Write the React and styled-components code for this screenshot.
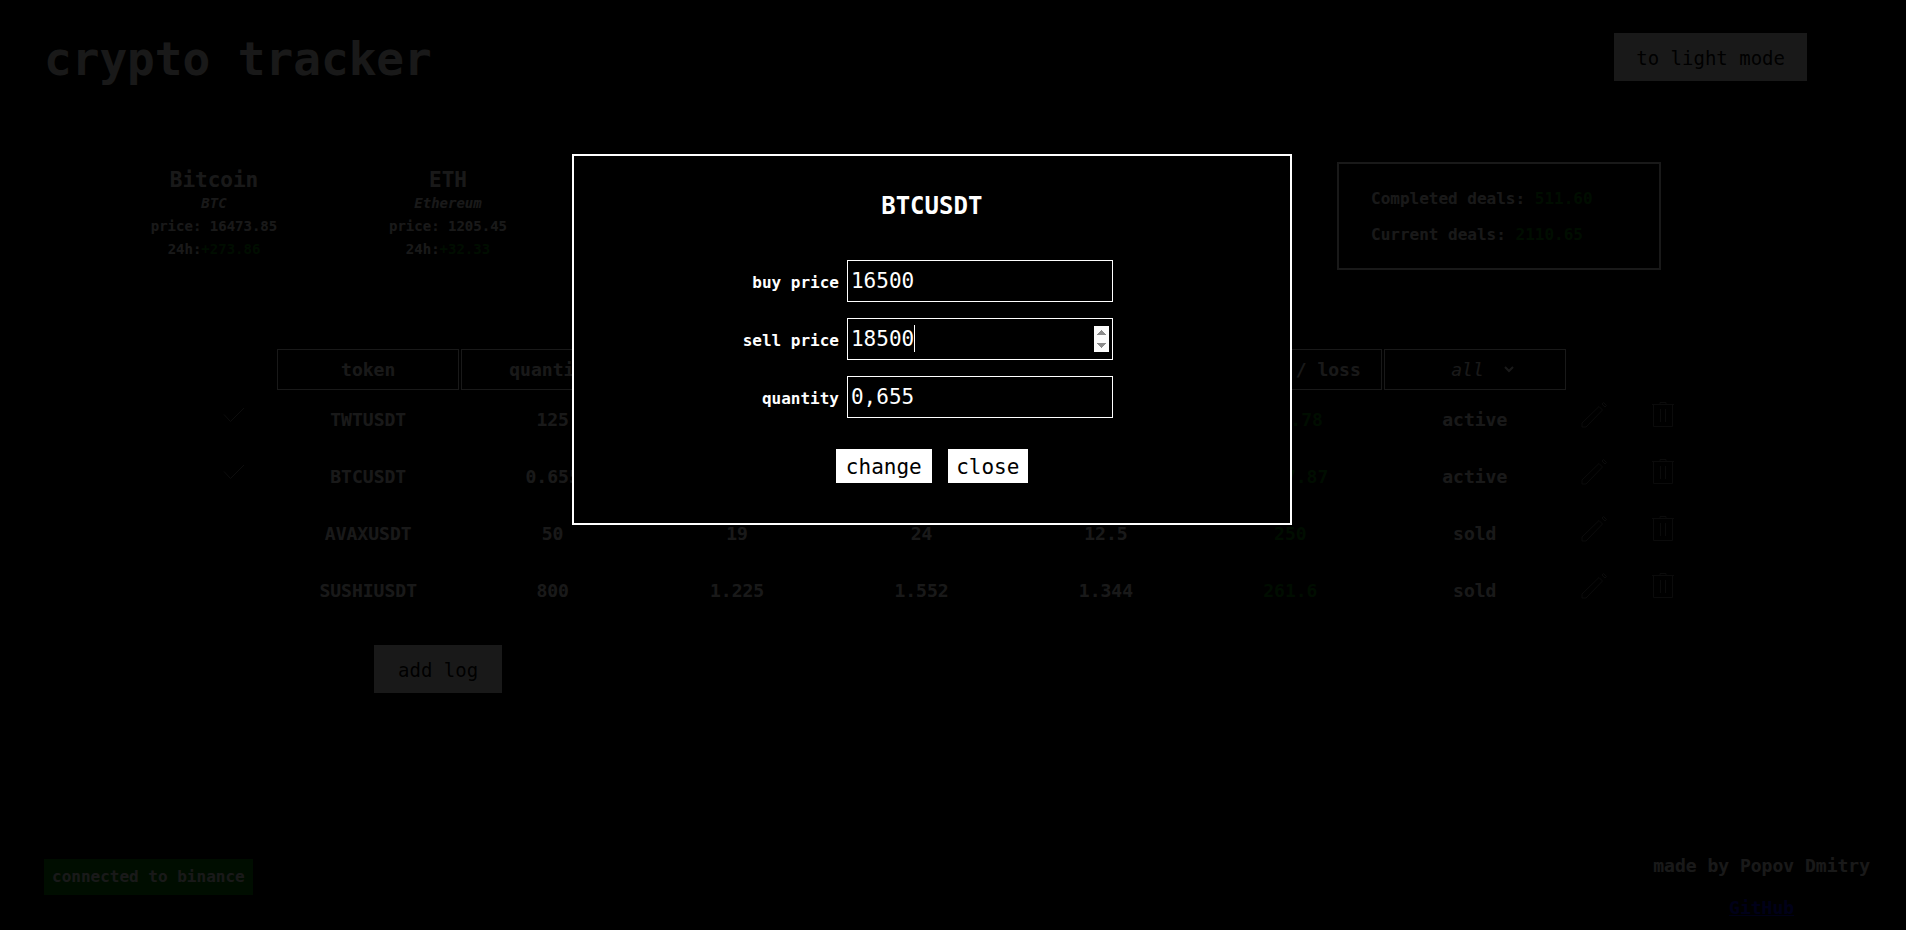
import React, { useState } from "react";
import styled, { createGlobalStyle } from "styled-components";

const GlobalStyle = createGlobalStyle`
  *, *::before, *::after { box-sizing: border-box; }
  body {
    margin: 0;
    background: #000;
    color: #fff;
    font-family: "DejaVu Sans Mono", "Liberation Mono", monospace;
  }
  button, input, select { font-family: inherit; }
`;

const Page = styled.div`
  display: flex;
  flex-direction: column;
  min-height: 100vh;
`;

const Header = styled.header`
  display: flex;
  justify-content: space-between;
  align-items: flex-start;
  padding: 24px 99px 0 44px;
`;

const Title = styled.h1`
  margin: 0;
  font-size: 46px;
  line-height: 70px;
`;

const ActionButton = styled.button`
  height: 48px;
  padding: 2px ${(p) => p.$pad}px 0;
  border: 0;
  background: #fff;
  color: #000;
  font-size: 19px;
`;

const ThemeSwitch = styled(ActionButton)`
  margin-top: 9px;
`;

const Summary = styled.section`
  display: flex;
  justify-content: space-between;
  align-items: flex-start;
  padding: 68px 245px 0 97px;
`;

const Coins = styled.div`
  display: flex;
`;

const Coin = styled.article`
  width: 234px;
  font-size: 14px;
  font-weight: 700;
  line-height: 23px;
  text-align: center;
`;

const CoinName = styled.h2`
  margin: 6px 0 0;
  font-size: 21px;
  line-height: 24px;
`;

const CoinLine = styled.p`
  margin: 0;
`;

const Gain = styled.span`
  color: #008000;
`;

const Deals = styled.div`
  width: 324px;
  padding: 17px 32px 15px;
  border: 2px solid #fff;
  font-size: 16px;
  font-weight: 700;
  line-height: 36px;
`;

const Main = styled.main`
  flex: 1;
  padding: 77px 200px 0 191px;
`;

const Table = styled.table`
  width: 100%;
  table-layout: fixed;
  border-collapse: separate;
  border-spacing: 2px;
  font-size: 18px;
  font-weight: 700;
  text-align: center;
`;

const Col = styled.col`
  width: ${(p) => p.$w}px;
`;

const HeadCell = styled.th`
  height: 41px;
  padding: 0;
  border: 1px solid #fff;
  white-space: nowrap;
`;

const Cell = styled.td`
  height: 55px;
  padding: 0;
  color: ${(p) => (p.$gain ? "#008000" : "inherit")};
`;

const FilterWrap = styled.span`
  display: inline-flex;
  align-items: center;
  gap: 20px;
  padding-left: 16px;
`;

const Filter = styled.select`
  appearance: none;
  padding: 0;
  border: 0;
  background: transparent;
  color: #fff;
  font-size: 18px;
  font-style: italic;
`;

const IconButton = styled.button`
  display: block;
  margin: 0 auto;
  padding: 0 0 10px;
  border: 0;
  background: none;
  color: #fff;
  line-height: 0;
`;

const AddRow = styled.div`
  padding: 25px 0 0 183px;
`;

const Footer = styled.footer`
  display: flex;
  justify-content: space-between;
  align-items: flex-start;
  padding: 0 36px 0 44px;
`;

const Status = styled.p`
  margin: 5px 0 0;
  padding: 0 8px;
  background: #008000;
  font-size: 16px;
  font-weight: 700;
  line-height: 36px;
`;

const Credits = styled.div`
  font-size: 18px;
  font-weight: 700;
  line-height: 24px;
  text-align: center;
`;

const CreditLine = styled.p`
  margin: 0 0 18px;
`;

const Link = styled.a`
  display: block;
  margin-bottom: 10px;
  color: #0000ee;
`;

const Overlay = styled.div`
  position: fixed;
  inset: 0;
  padding: 154px 0 0 30%;
  background: rgba(0, 0, 0, 0.9);
`;

const Dialog = styled.form`
  display: flex;
  flex-direction: column;
  align-items: center;
  width: 720px;
  max-width: 90%;
  padding: 34px 0 40px;
  border: 2px solid #fff;
  background: #000;
`;

const DialogTitle = styled.h2`
  margin: 0 0 38px;
  font-size: 24px;
  line-height: 32px;
`;

const Fields = styled.div`
  display: grid;
  grid-template-columns: auto 266px;
  gap: 16px 8px;
  align-items: center;
  margin: 0 8px 31px 0;
`;

const Label = styled.label`
  padding-top: 2px;
  font-size: 16px;
  font-weight: 700;
  text-align: right;
`;

const InputBox = styled.span`
  position: relative;
  display: block;
`;

const Input = styled.input`
  display: block;
  width: 100%;
  height: 42px;
  padding: 0 3px;
  border: 1px solid #fff;
  background: #000;
  color: #fff;
  caret-color: transparent;
  font-size: 21px;
  outline: 0;

  &::-webkit-inner-spin-button {
    opacity: 1;
    height: 26px;
  }
`;

const Caret = styled.span`
  position: absolute;
  top: 7px;
  left: calc(4px + ${(p) => p.$chars}ch);
  width: 1px;
  height: 27px;
  background: #fff;
  font-size: 21px;
`;

const Buttons = styled.div`
  display: flex;
  gap: 16px;
`;

const DialogButton = styled.button`
  width: ${(p) => p.$w}px;
  height: 34px;
  padding: 2px 0 0;
  border: 0;
  background: #fff;
  color: #000;
  font-size: 21px;
`;

const CheckIcon = () => (
  <svg width="22" height="16" viewBox="0 0 22 16" fill="none" stroke="currentColor" strokeWidth="1" opacity="0.5">
    <path d="M1 7.5 7.5 14.5 21 1" />
  </svg>
);

const EditIcon = () => (
  <svg width="26" height="26" viewBox="0 0 26 26" fill="none" stroke="currentColor" strokeWidth="1" opacity="0.45">
    <path d="M1 25v-4L18 4.500l3.500 3.500L5 25zM21 2l1.500-1.500 3 3L24 5z" />
  </svg>
);

const TrashIcon = () => (
  <svg width="22" height="26" viewBox="0 0 22 26" fill="none" stroke="currentColor" strokeWidth="1" opacity="0.45">
    <path d="M0 2.500h22M8 2V.5h6V2M1.500 3v21.500h19V3M8.500 7v13M13.500 7v13" />
  </svg>
);

const coins = [
  { name: "Bitcoin", symbol: "BTC", price: "16473.85", change: "+273.86" },
  { name: "ETH", symbol: "Ethereum", price: "1205.45", change: "+32.33" },
];

const columns = ["token", "quantity", "buy price", "sell price", "price", "profit / loss"];

const logs = [
  { token: "TWTUSDT", values: ["125", "1", "2.5", "2.382"], profit: "172.78", state: "active" },
  { token: "BTCUSDT", values: ["0.655", "16500", "", "16473"], profit: "1937.87", state: "active" },
  { token: "AVAXUSDT", values: ["50", "19", "24", "12.5"], profit: "250", state: "sold" },
  { token: "SUSHIUSDT", values: ["800", "1.225", "1.552", "1.344"], profit: "261.6", state: "sold" },
];

export default function App() {
  const [buy, setBuy] = useState("16500");
  const [sell, setSell] = useState("18500");
  const [quantity, setQuantity] = useState("0,655");

  return (
    <>
      <GlobalStyle />
      <Page>
        <Header>
          <Title>crypto tracker</Title>
          <ThemeSwitch type="button" $pad={22}>to light mode</ThemeSwitch>
        </Header>

        <Summary>
          <Coins>
            {coins.map((c) => (
              <Coin key={c.name}>
                <CoinName>{c.name}</CoinName>
                <CoinLine><em>{c.symbol}</em></CoinLine>
                <CoinLine>price: {c.price}</CoinLine>
                <CoinLine>24h:<Gain>{c.change}</Gain></CoinLine>
              </Coin>
            ))}
          </Coins>
          <Deals>
            <CoinLine>Completed deals: <Gain>511.60</Gain></CoinLine>
            <CoinLine>Current deals: <Gain>2110.65</Gain></CoinLine>
          </Deals>
        </Summary>

        <Main>
          <Table>
            <colgroup>
              <Col $w={82} />
              <col span={7} />
              <Col $w={52} />
              <Col $w={82} />
            </colgroup>
            <thead>
              <tr>
                <td />
                {columns.map((c) => <HeadCell key={c}>{c}</HeadCell>)}
                <HeadCell>
                  <FilterWrap>
                    <Filter aria-label="state" defaultValue="all">
                      <option>all</option>
                    </Filter>
                    <svg width="10" height="7" viewBox="0 0 10 7" fill="none" stroke="currentColor" strokeWidth="2">
                      <path d="M1 1l4 4 4-4" />
                    </svg>
                  </FilterWrap>
                </HeadCell>
                <td />
                <td />
              </tr>
            </thead>
            <tbody>
              {logs.map((l) => (
                <tr key={l.token}>
                  <Cell>
                    {l.state === "active" && (
                      <IconButton type="button" aria-label="mark as sold"><CheckIcon /></IconButton>
                    )}
                  </Cell>
                  <Cell>{l.token}</Cell>
                  {l.values.map((v, i) => <Cell key={i}>{v}</Cell>)}
                  <Cell $gain>{l.profit}</Cell>
                  <Cell>{l.state}</Cell>
                  <Cell><IconButton type="button" aria-label="edit"><EditIcon /></IconButton></Cell>
                  <Cell><IconButton type="button" aria-label="delete"><TrashIcon /></IconButton></Cell>
                </tr>
              ))}
            </tbody>
          </Table>
          <AddRow>
            <ActionButton type="button" $pad={24}>add log</ActionButton>
          </AddRow>
        </Main>

        <Footer>
          <Status>connected to binance</Status>
          <Credits>
            <CreditLine>made by Popov Dmitry</CreditLine>
            <Link href="#github">GitHub</Link>
          </Credits>
        </Footer>
      </Page>

      <Overlay>
        <Dialog role="dialog" aria-labelledby="dialog-title" onSubmit={(e) => e.preventDefault()}>
          <DialogTitle id="dialog-title">BTCUSDT</DialogTitle>
          <Fields>
            <Label htmlFor="buy">buy price</Label>
            <Input id="buy" inputMode="decimal" value={buy} onChange={(e) => setBuy(e.target.value)} />
            <Label htmlFor="sell">sell price</Label>
            <InputBox>
              <Input id="sell" type="number" autoFocus value={sell} onChange={(e) => setSell(e.target.value)} />
              <Caret $chars={sell.length} />
            </InputBox>
            <Label htmlFor="quantity">quantity</Label>
            <Input id="quantity" inputMode="decimal" value={quantity} onChange={(e) => setQuantity(e.target.value)} />
          </Fields>
          <Buttons>
            <DialogButton type="submit" $w={96}>change</DialogButton>
            <DialogButton type="button" $w={80}>close</DialogButton>
          </Buttons>
        </Dialog>
      </Overlay>
    </>
  );
}
